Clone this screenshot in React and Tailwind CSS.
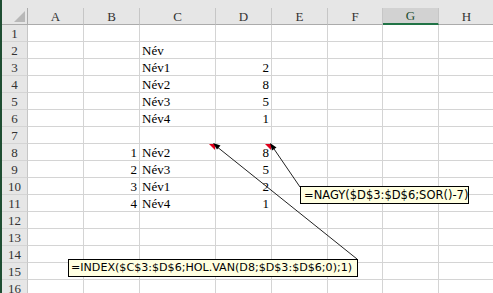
import React from 'react';

const cols = ['A', 'B', 'C', 'D', 'E', 'F', 'G', 'H'];

// cell values by row number: [B, C, D]
const data = {
  2: ['', 'Név', ''],
  3: ['', 'Név1', '2'],
  4: ['', 'Név2', '8'],
  5: ['', 'Név3', '5'],
  6: ['', 'Név4', '1'],
  8: ['1', 'Név2', '8'],
  9: ['2', 'Név3', '5'],
  10: ['3', 'Név1', '2'],
  11: ['4', 'Név4', '1'],
};

const rows = Array.from({ length: 16 }, (_, i) => i + 1);

const Cell = ({ children, right }) => (
  <div
    className={`h-[17px] border-r border-b border-[#d4d4d4] px-[2px] text-[13px] leading-[17px] text-black whitespace-nowrap overflow-visible ${
      right ? 'text-right' : 'text-left'
    }`}
  >
    {children}
  </div>
);

const App = () => {
  return (
    <div className="relative w-[493px] h-[293px] overflow-hidden bg-white">
      <div className="border-l-2 border-[#1f4e33] font-['Liberation_Serif',serif]">
        <div className="h-[8px] bg-[#e6e6e6]" />

        <div className="grid grid-cols-[26px_56px_56px_76px_56px_56px_55px_56px_56px]">
          {/* header row */}
          <div className="relative h-[17px] bg-[#e6e6e6] border-r border-b border-[#ababab]">
            <svg className="absolute right-[2px] bottom-[2px]" width="11" height="11" viewBox="0 0 11 11">
              <polygon points="11,0 11,11 0,11" fill="#b8b8b8" />
            </svg>
          </div>
          {cols.map((c) => (
            <div
              key={c}
              className={
                c === 'G'
                  ? 'h-[17px] bg-[#d2d2d2] border-r border-[#c6c6c6] border-b-2 border-b-[#217346] text-center text-[13px] leading-[16px] text-[#1d4d30]'
                  : 'h-[17px] bg-[#e6e6e6] border-r border-[#c6c6c6] border-b border-b-[#ababab] text-center text-[13px] leading-[17px] text-[#333]'
              }
            >
              {c}
            </div>
          ))}

          {rows.map((r) => {
            const d = data[r] || ['', '', ''];
            return (
              <React.Fragment key={r}>
                <div className="h-[17px] bg-[#e6e6e6] border-r border-[#c6c6c6] border-b border-b-[#d4d4d4] text-center text-[13px] leading-[17px] text-[#333]">
                  {r}
                </div>
                <Cell />
                <Cell right>{d[0]}</Cell>
                <Cell>{d[1]}</Cell>
                <Cell right>{d[2]}</Cell>
                <Cell />
                <Cell />
                <Cell />
                <Cell />
              </React.Fragment>
            );
          })}
        </div>
      </div>

      {/* comment indicators and arrows */}
      <svg className="absolute left-0 top-0" width="493" height="293" viewBox="0 0 493 293">
        <polygon points="209,144 215,144 215,150" fill="#e0001b" />
        <polygon points="265,144 271,144 271,150" fill="#e0001b" />
        <line x1="216" y1="146" x2="357" y2="259" stroke="#222" strokeWidth="1" />
        <line x1="272" y1="146" x2="300" y2="187" stroke="#222" strokeWidth="1" />
        <polygon points="213,143 217,149.5 220.5,145.5" fill="#000" />
        <polygon points="270,143 272,150.5 276.5,147.5" fill="#000" />
      </svg>

      <div className="absolute left-[300px] top-[186px] w-[169px] h-[18px] bg-[#ffffe1] border border-black pl-[3px] font-['DejaVu_Sans',sans-serif] text-[11.5px] leading-[16px] text-black whitespace-nowrap">
        =NAGY($D$3:$D$6;SOR()-7)
      </div>
      <div className="absolute left-[68px] top-[259px] w-[290px] h-[18px] bg-[#ffffe1] border border-black pl-[2px] font-['DejaVu_Sans',sans-serif] text-[11.1px] leading-[16px] text-black whitespace-nowrap">
        =INDEX($C$3:$D$6;HOL.VAN(D8;$D$3:$D$6;0);1)
      </div>
    </div>
  );
};

export default App;
